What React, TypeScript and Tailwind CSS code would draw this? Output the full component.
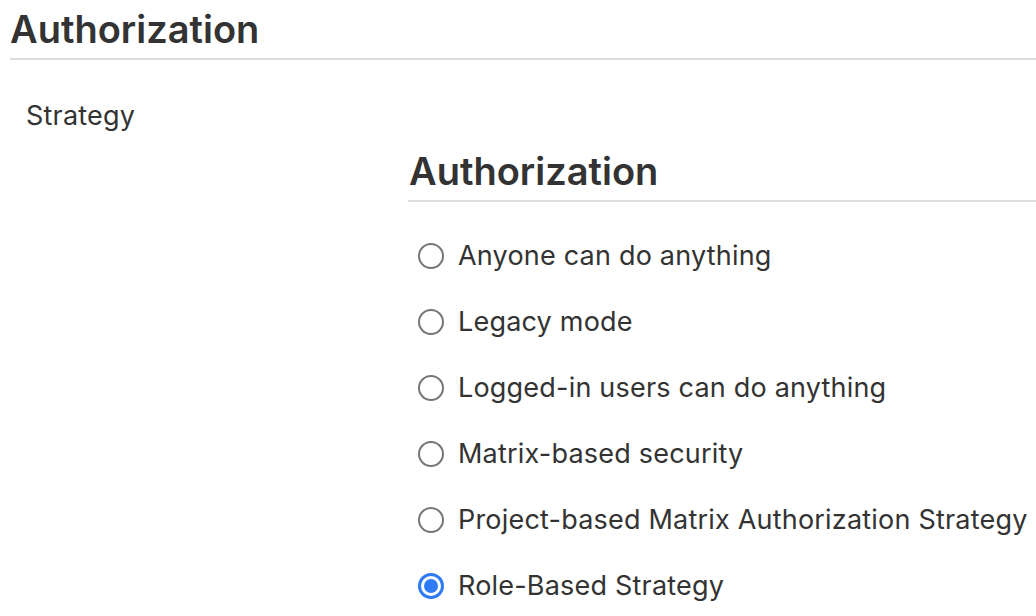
const options = [
  'Anyone can do anything',
  'Legacy mode',
  'Logged-in users can do anything',
  'Matrix-based security',
  'Project-based Matrix Authorization Strategy',
  'Role-Based Strategy',
]

function Radio({ checked }: { checked: boolean }) {
  if (checked) {
    return (
      <span className="w-[26px] h-[26px] rounded-full border-[3px] border-[#2f7bf5] flex items-center justify-center shrink-0">
        <span className="w-[14px] h-[14px] rounded-full bg-[#2f7bf5]" />
      </span>
    )
  }
  return <span className="w-[26px] h-[26px] rounded-full border-2 border-[#767676] bg-white shrink-0" />
}

export default function App() {
  return (
    <div className="w-[1036px] h-[616px] bg-white overflow-hidden text-[#333]" style={{ fontFamily: 'Inter, "Noto Sans", sans-serif' }}>
      <div className="pl-[10px]">
        <h2 className="text-[38px] font-semibold leading-[58px] h-[60px] border-b-2 border-[#dedede]">Authorization</h2>
      </div>
      <div className="flex">
        <div className="w-[408px] shrink-0 pl-[26px] pt-[38px] text-[27px] tracking-[0.2px] leading-[36px]">Strategy</div>
        <div className="flex-1 min-w-0 pt-[82px]">
          <h3 className="text-[38px] font-semibold leading-[58px] h-[60px] border-b-2 border-[#dedede] pl-px">Authorization</h3>
          <ul className="pt-[36px] flex flex-col gap-[30px]">
            {options.map((o, i) => (
              <li key={o} className="flex items-center gap-[14px] pl-[10px] h-[36px] text-[27px] tracking-[0.2px]">
                <Radio checked={i === options.length - 1} />
                <span className="whitespace-nowrap">{o}</span>
              </li>
            ))}
          </ul>
        </div>
      </div>
    </div>
  )
}
